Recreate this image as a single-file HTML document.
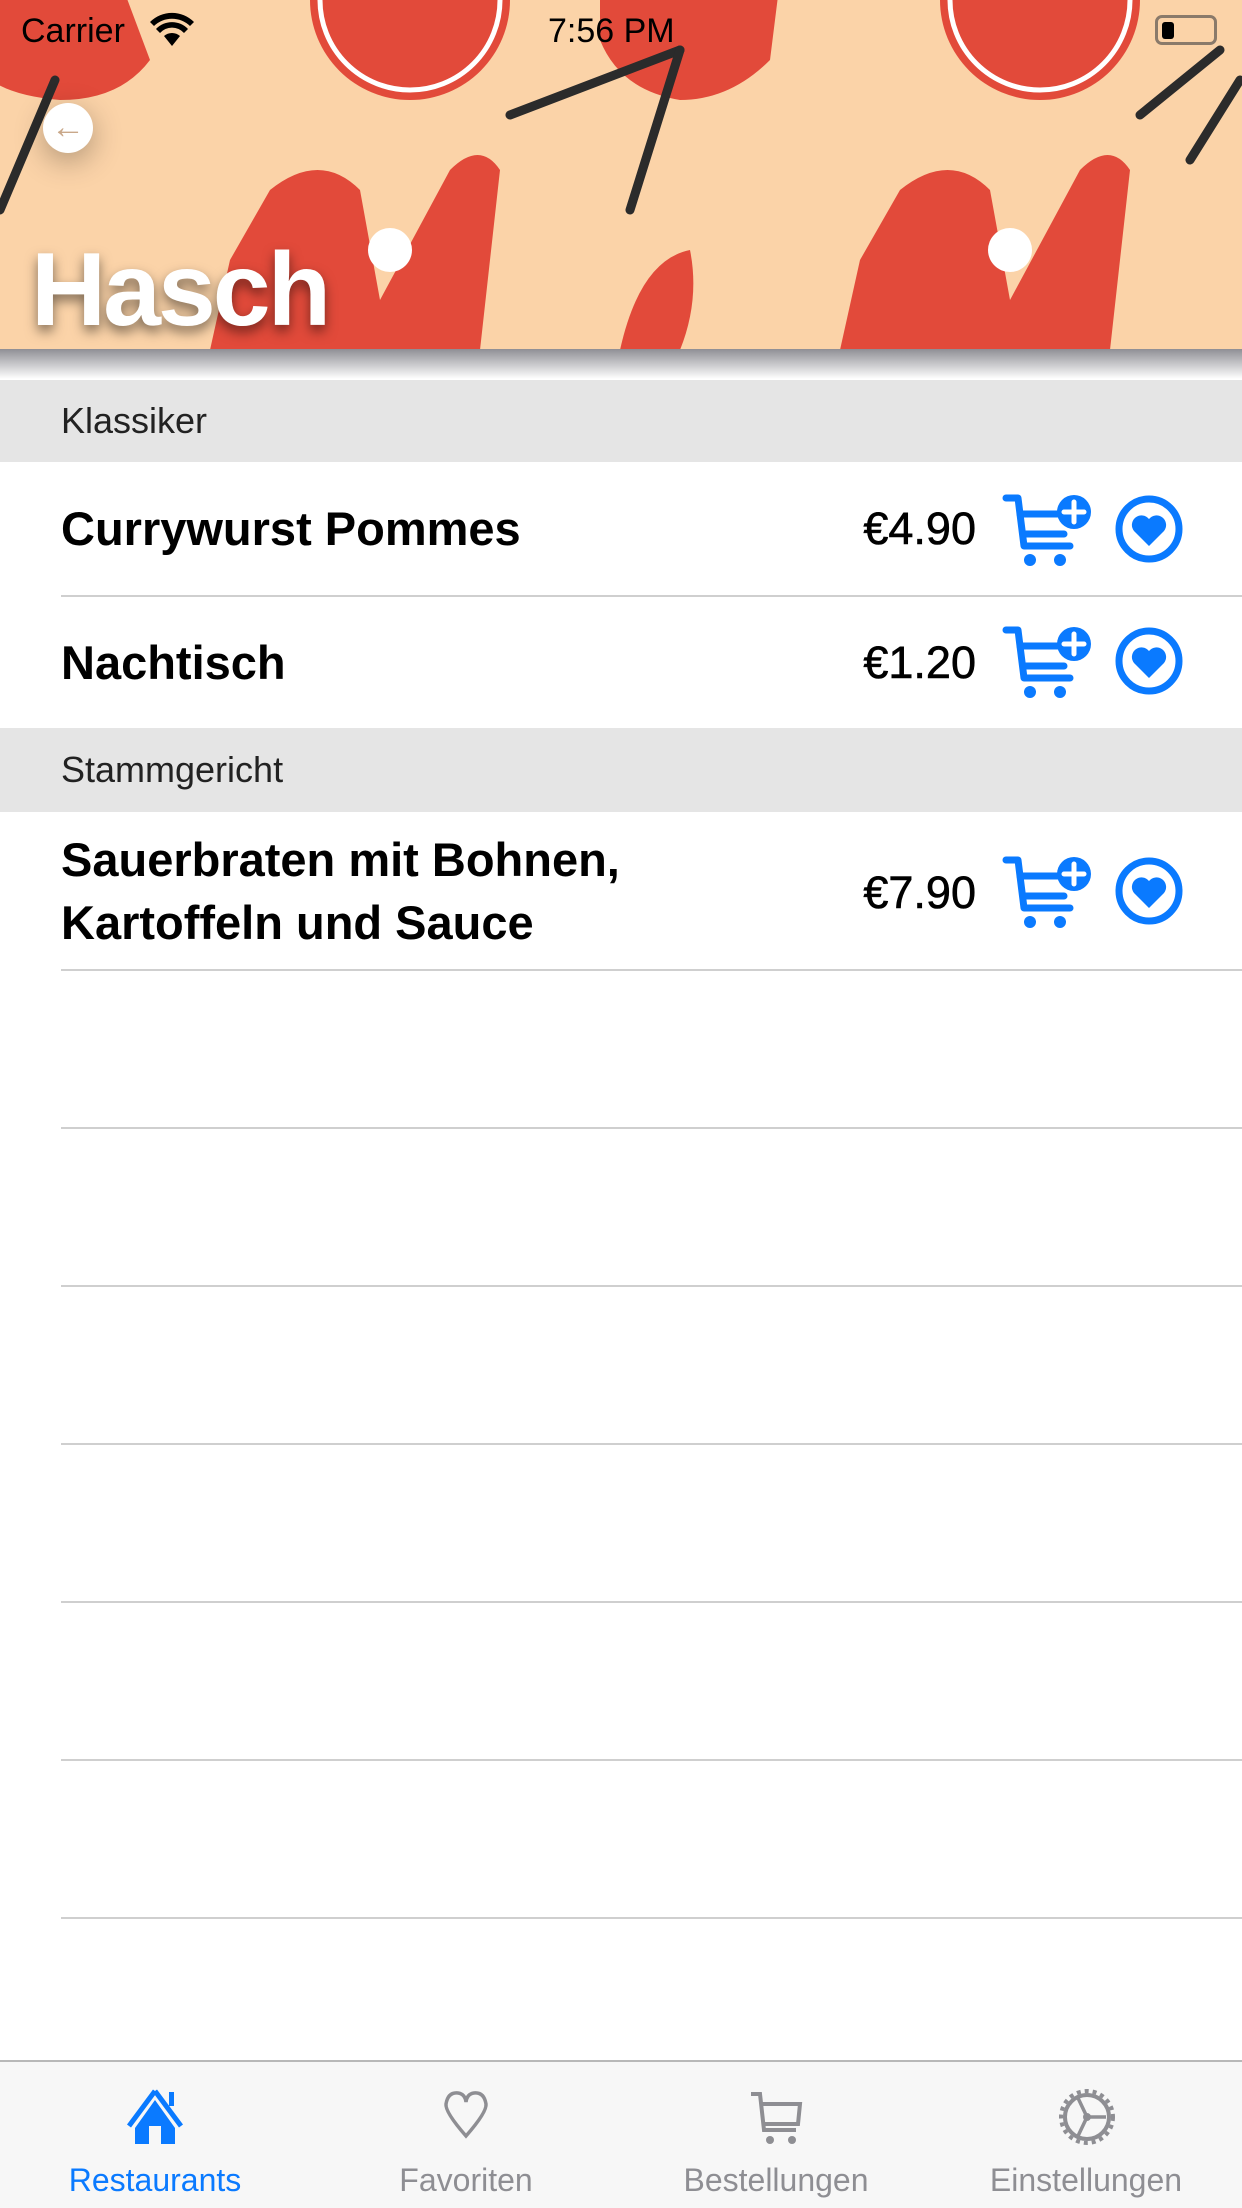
<!DOCTYPE html>
<html><head><meta charset="utf-8"><style>
*{margin:0;padding:0;box-sizing:border-box}
body{width:1242px;height:2208px;background:#fff;font-family:"Liberation Sans",sans-serif;position:relative;overflow:hidden}
.abs{position:absolute}
.sec{position:absolute;left:0;width:1242px;background:#e5e5e5;color:#222;font-size:36px}
.sec span{position:absolute;left:61px;top:50%;transform:translateY(-50%)}
.name{position:absolute;left:61px;font-size:47px;font-weight:bold;color:#000;line-height:63px}
.price{position:absolute;right:266px;font-size:45px;color:#000;-webkit-text-stroke:0.6px #000}
.sep{position:absolute;left:61px;right:0;height:2px;background:#cfcfcf}
.tab{position:absolute;top:2162px;font-size:32px;color:#8e8e93;transform:translateX(-50%);white-space:nowrap}
</style></head><body>
<svg class="abs" style="left:0;top:0" width="1242" height="350" viewBox="0 0 1242 350">
<rect width="1242" height="350" fill="#fbd3a8"/>
<g fill="#e24a3a">
<path d="M-20 -20 L120 -20 L150 60 Q120 100 60 100 Q0 95 -20 70Z"/>
<circle cx="410" cy="0" r="100"/><circle cx="1040" cy="0" r="100"/>
<path d="M600 -20 L780 -20 L770 60 Q730 100 680 100 Q620 90 600 40Z"/>
<path d="M270 190 Q320 150 360 190 L380 300 L450 170 Q480 140 500 170 L480 350 L210 350 L230 260Z"/>
<path d="M900 190 Q950 150 990 190 L1010 300 L1080 170 Q1110 140 1130 170 L1110 350 L840 350 L860 260Z"/>
<path d="M620 350 Q640 260 690 250 Q700 300 680 350Z"/>
</g>
<g stroke="#fff" stroke-width="5" fill="none"><circle cx="410" cy="0" r="90"/><circle cx="1040" cy="0" r="90"/></g>
<g stroke="#2b2b2b" stroke-width="9" stroke-linecap="round">
<line x1="55" y1="80" x2="0" y2="210"/><line x1="680" y1="50" x2="510" y2="115"/><line x1="680" y1="50" x2="630" y2="210"/><line x1="1220" y1="50" x2="1140" y2="115"/><line x1="1240" y1="80" x2="1190" y2="160"/>
</g>
<g fill="#fff"><circle cx="390" cy="250" r="22"/><circle cx="1010" cy="250" r="22"/></g>
</svg>
<div class="abs" style="left:0;top:349px;width:1242px;height:30px;background:linear-gradient(#8f8f95,rgba(255,255,255,0))"></div>
<div class="abs" style="left:21px;top:12px;font-size:34px;color:#000">Carrier</div>
<svg class="abs" style="left:150px;top:12px" width="44" height="36" viewBox="0 0 44 36"><path d="M22 34 L14 24 A12 12 0 0 1 30 24Z M6 17 A22 22 0 0 1 38 17 L34 21 A16 16 0 0 0 10 21Z M0 10 A31 31 0 0 1 44 10 L40 14 A26 26 0 0 0 4 14Z" fill="#000"/></svg>
<div class="abs" style="left:548px;top:12px;font-size:34px;color:#000">7:56 PM</div>
<div class="abs" style="left:1155px;top:15px;width:62px;height:30px;border:3px solid #8a7a6a;border-radius:7px"><div style="position:absolute;left:4px;top:4px;width:12px;height:17px;background:#000;border-radius:3px"></div></div>
<div class="abs" style="left:43px;top:103px;width:50px;height:50px;border-radius:50%;background:#fff;box-shadow:0 8px 30px rgba(0,0,0,.3);color:#c9a88a;font-size:34px;text-align:center;line-height:48px">&#8592;</div>
<div class="abs" style="left:31px;top:234px;font-size:104px;font-weight:bold;color:#fff;text-shadow:0 6px 12px rgba(0,0,0,.5);line-height:112px;letter-spacing:-3px">Hasch</div>

<div class="sec" style="top:380px;height:82px"><span>Klassiker</span></div>
<div class="name" style="top:497px">Currywurst Pommes</div>
<div class="price" style="top:503px">€4.90</div>
<div class="sep" style="top:595px"></div>
<div class="name" style="top:631px">Nachtisch</div>
<div class="price" style="top:637px">€1.20</div>
<div class="sec" style="top:728px;height:84px"><span>Stammgericht</span></div>
<div class="name" style="top:828px">Sauerbraten mit Bohnen,<br>Kartoffeln und Sauce</div>
<div class="price" style="top:867px">€7.90</div>
<div class="sep" style="top:969px"></div>

<svg width="0" height="0" style="position:absolute"><defs>
<g id="cart"><path d="M4 4 H16 L22 52 H68" stroke="#0a7aff" stroke-width="7" fill="none" stroke-linecap="round" stroke-linejoin="round"/><path d="M18 20 H56 M21 40 H62" stroke="#0a7aff" stroke-width="7" stroke-linecap="round"/><circle cx="28" cy="66" r="6" fill="#0a7aff"/><circle cx="58" cy="66" r="6" fill="#0a7aff"/><circle cx="72" cy="18" r="17" fill="#0a7aff"/><path d="M72 8 V28 M62 18 H82" stroke="#fff" stroke-width="5" stroke-linecap="round"/></g>
<g id="fav"><circle cx="34" cy="34" r="30" stroke="#0a7aff" stroke-width="7" fill="none"/><path d="M34 51 L19 36 A9 9 0 0 1 34 24 A9 9 0 0 1 49 36Z" fill="#0a7aff"/></g>
</defs></svg>
<svg class="abs" style="left:1002px;top:494px" width="92" height="76"><use href="#cart"/></svg>
<svg class="abs" style="left:1115px;top:495px" width="70" height="70"><use href="#fav"/></svg>
<svg class="abs" style="left:1002px;top:626px" width="92" height="76"><use href="#cart"/></svg>
<svg class="abs" style="left:1115px;top:627px" width="70" height="70"><use href="#fav"/></svg>
<svg class="abs" style="left:1002px;top:856px" width="92" height="76"><use href="#cart"/></svg>
<svg class="abs" style="left:1115px;top:857px" width="70" height="70"><use href="#fav"/></svg>

<div class="sep" style="top:1127px"></div>
<div class="sep" style="top:1285px"></div>
<div class="sep" style="top:1443px"></div>
<div class="sep" style="top:1601px"></div>
<div class="sep" style="top:1759px"></div>
<div class="sep" style="top:1917px"></div>

<div class="abs" style="left:0;top:2060px;width:1242px;height:148px;background:#f7f7f7;border-top:2px solid #b8b8b8"></div>
<svg class="abs" style="left:125px;top:2088px" width="60" height="56" viewBox="0 0 60 56"><path d="M30 3 L4 38 M30 3 L56 38" stroke="#0a7aff" stroke-width="5"/><path d="M30 12 L10 40 V56 H24 V38 H36 V56 H50 V40Z" fill="#0a7aff"/><rect x="44" y="4" width="5" height="14" fill="#0a7aff"/></svg>
<svg class="abs" style="left:441px;top:2090px" width="50" height="50" viewBox="0 0 50 50"><path d="M25 46 Q4 22 5 14 Q7 2 17 3 Q24 4 25 12 Q26 4 33 3 Q43 2 45 14 Q46 22 25 46Z" stroke="#8e8e93" stroke-width="3.5" fill="none"/></svg>
<svg class="abs" style="left:748px;top:2090px" width="56" height="56" viewBox="0 0 56 56"><path d="M3 4 H12 L16 40 H48 M14 14 H52 L50 34 H16" stroke="#8e8e93" stroke-width="4" fill="none"/><circle cx="22" cy="50" r="4" fill="#8e8e93"/><circle cx="44" cy="50" r="4" fill="#8e8e93"/></svg>
<svg class="abs" style="left:1058px;top:2088px" width="58" height="58" viewBox="0 0 58 58"><circle cx="29" cy="29" r="22" stroke="#8e8e93" stroke-width="4" fill="none"/><circle cx="29" cy="29" r="26" stroke="#8e8e93" stroke-width="4" fill="none" stroke-dasharray="4 4"/><path d="M29 29 L20 10 M29 29 H48 M29 29 L20 48" stroke="#8e8e93" stroke-width="3.5"/><circle cx="29" cy="29" r="4" fill="#8e8e93"/></svg>
<div class="tab" style="left:155px;color:#0a7aff">Restaurants</div>
<div class="tab" style="left:466px">Favoriten</div>
<div class="tab" style="left:776px">Bestellungen</div>
<div class="tab" style="left:1086px">Einstellungen</div>
</body></html>
